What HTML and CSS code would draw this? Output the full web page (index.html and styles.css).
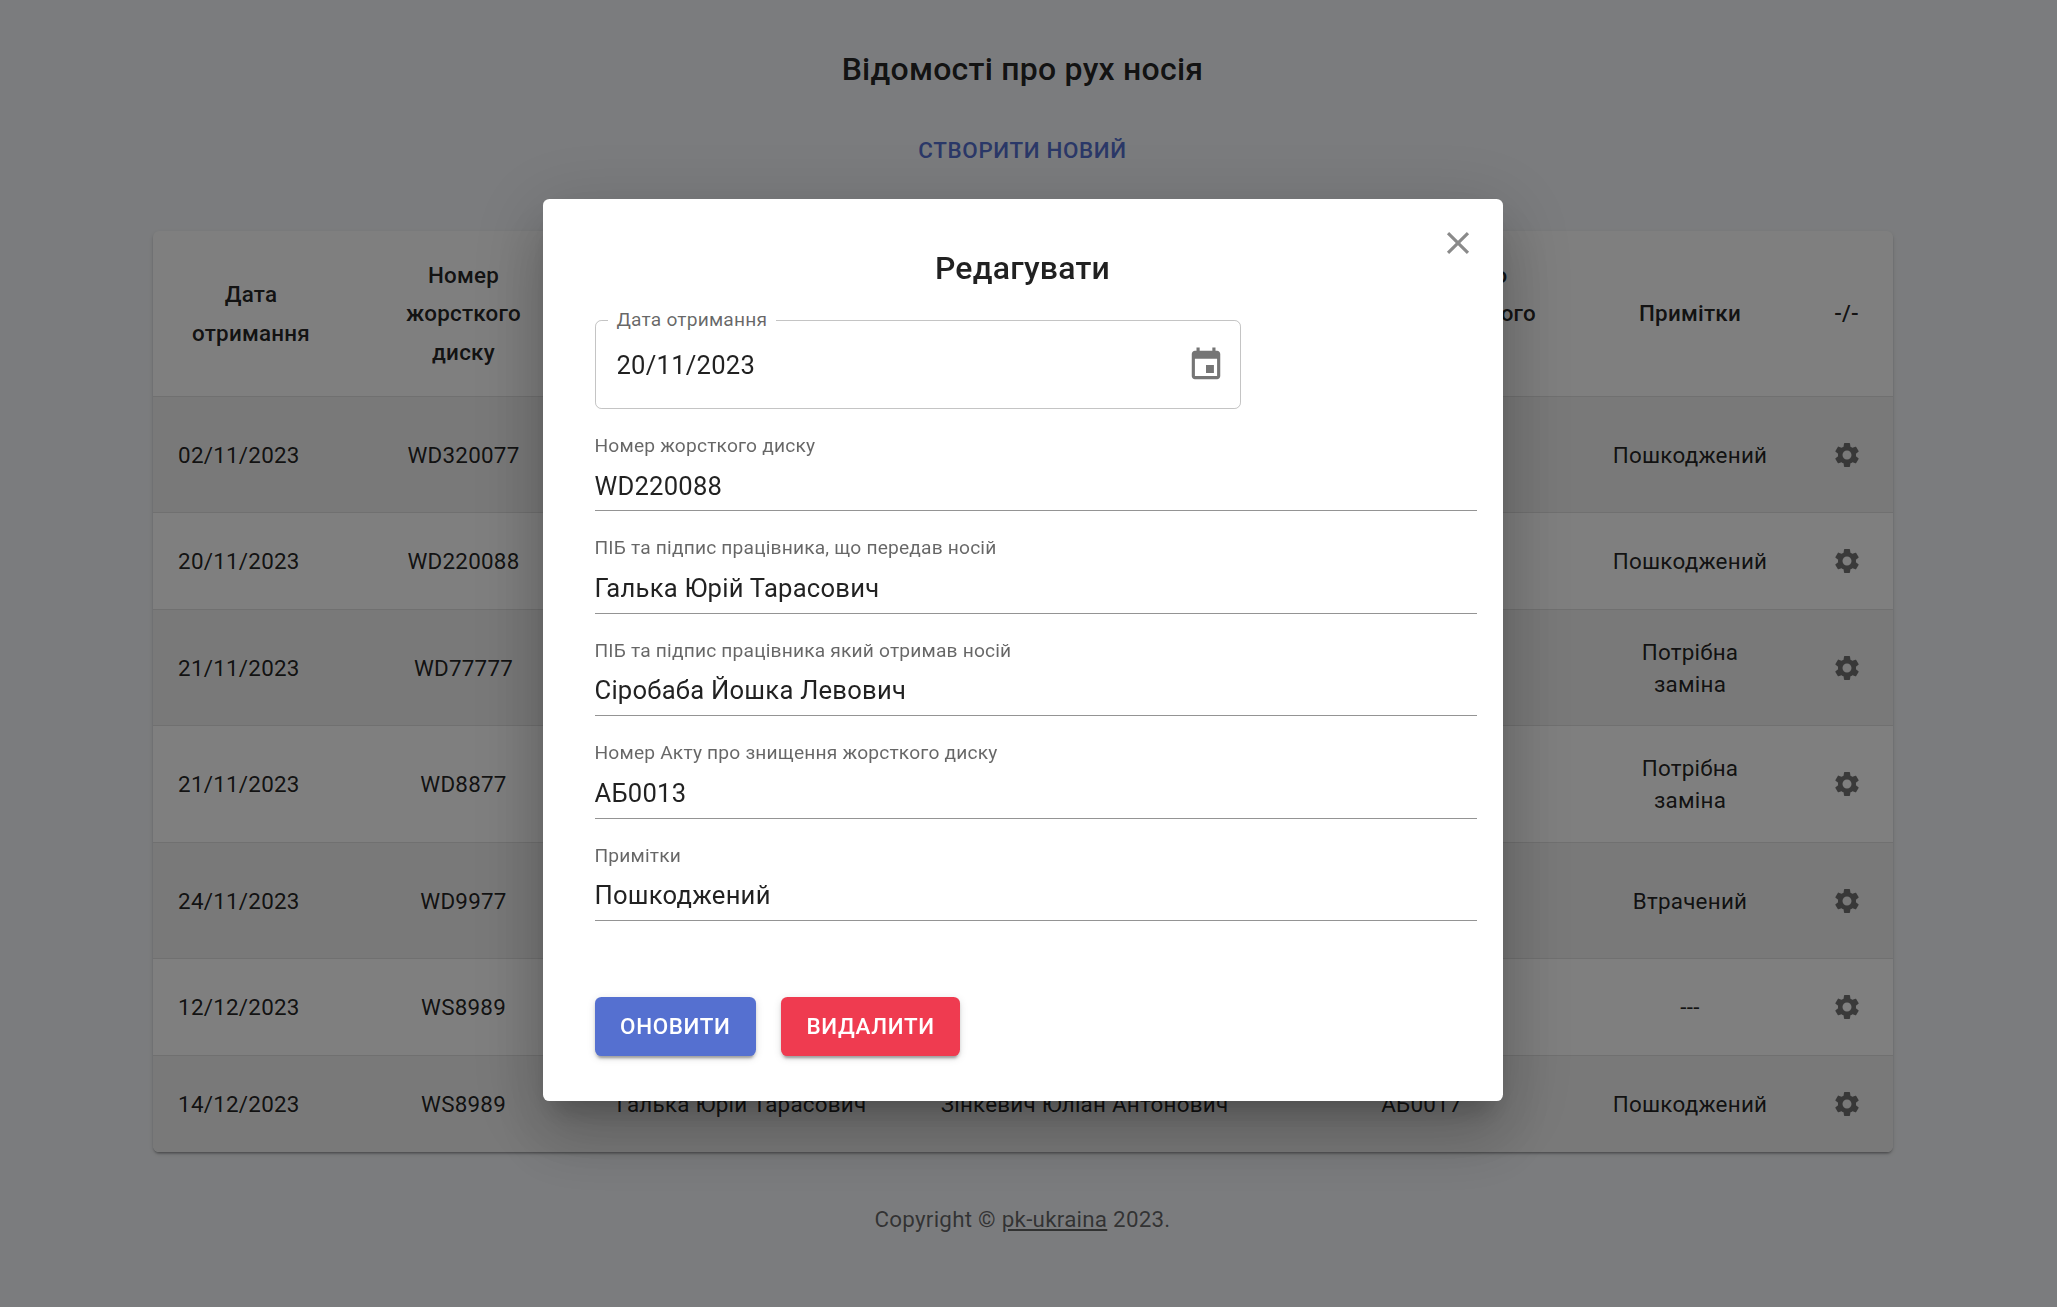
FILE: index.html
```html
<!DOCTYPE html>
<html lang="uk">
<head>
  <meta charset="UTF-8">
  <meta name="viewport" content="width=device-width, initial-scale=1.0">
  <title>Відомості про рух носія</title>
  <link rel="stylesheet" href="styles.css">
</head>
<body>
  <svg class="sprite" aria-hidden="true">
    <symbol id="gear" viewBox="0 0 24 24"><path d="M19.14 12.94c.04-.3.06-.61.06-.94 0-.32-.02-.64-.07-.94l2.03-1.58c.18-.14.23-.41.12-.61l-1.92-3.32c-.12-.22-.37-.29-.59-.22l-2.39.96c-.5-.38-1.03-.7-1.62-.94l-.36-2.54c-.04-.24-.24-.41-.48-.41h-3.84c-.24 0-.43.17-.47.41l-.36 2.54c-.59.24-1.13.57-1.62.94l-2.39-.96c-.22-.08-.47 0-.59.22L2.74 8.87c-.12.21-.08.47.12.61l2.03 1.58c-.05.3-.09.63-.09.94s.02.64.07.94l-2.03 1.58c-.18.14-.23.41-.12.61l1.92 3.32c.12.22.37.29.59.22l2.39-.96c.5.38 1.03.7 1.62.94l.36 2.54c.05.24.24.41.48.41h3.84c.24 0 .44-.17.47-.41l.36-2.54c.59-.24 1.13-.56 1.62-.94l2.39.96c.22.08.47 0 .59-.22l1.92-3.32c.12-.22.07-.47-.12-.61l-2.01-1.58zM12 15.6c-1.98 0-3.6-1.62-3.6-3.6s1.62-3.6 3.6-3.6 3.6 1.62 3.6 3.6-1.62 3.6-3.6 3.6z"/></symbol>
  </svg>

  <div class="page">
    <h1 class="page-title">Відомості про рух носія</h1>
    <a class="create-link" href="#">Створити новий</a>

    <div class="table-card">
      <table class="moves">
        <colgroup>
          <col class="col-date"><col class="col-disk"><col class="col-from"><col class="col-to"><col class="col-act"><col class="col-note"><col class="col-gear">
        </colgroup>
        <thead>
          <tr>
            <th>Дата отримання</th>
            <th>Номер жорсткого диску</th>
            <th></th>
            <th></th>
            <th>Номер Акту про знищення жорсткого диску</th>
            <th>Примітки</th>
            <th>-/-</th>
          </tr>
        </thead>
        <tbody>
          <tr class="tall">
            <td class="date">02/11/2023</td><td>WD320077</td><td></td><td></td><td></td><td>Пошкоджений</td>
            <td><svg class="gear"><use href="#gear"/></svg></td>
          </tr>
          <tr class="short">
            <td class="date">20/11/2023</td><td>WD220088</td><td></td><td></td><td></td><td>Пошкоджений</td>
            <td><svg class="gear"><use href="#gear"/></svg></td>
          </tr>
          <tr class="tall">
            <td class="date">21/11/2023</td><td>WD77777</td><td></td><td></td><td></td><td>Потрібна заміна</td>
            <td><svg class="gear"><use href="#gear"/></svg></td>
          </tr>
          <tr class="tall taller">
            <td class="date">21/11/2023</td><td>WD8877</td><td></td><td></td><td></td><td>Потрібна заміна</td>
            <td><svg class="gear"><use href="#gear"/></svg></td>
          </tr>
          <tr class="tall">
            <td class="date">24/11/2023</td><td>WD9977</td><td></td><td></td><td></td><td>Втрачений</td>
            <td><svg class="gear"><use href="#gear"/></svg></td>
          </tr>
          <tr class="short">
            <td class="date">12/12/2023</td><td>WS8989</td><td></td><td></td><td></td><td>---</td>
            <td><svg class="gear"><use href="#gear"/></svg></td>
          </tr>
          <tr class="short">
            <td class="date">14/12/2023</td><td>WS8989</td><td>Галька Юрій Тарасович</td><td>Зінкевич Юліан Антонович</td><td>АБ0017</td><td>Пошкоджений</td>
            <td><svg class="gear"><use href="#gear"/></svg></td>
          </tr>
        </tbody>
      </table>
    </div>

    <p class="copyright">Copyright © <a href="#">pk-ukraina</a> 2023.</p>
  </div>

  <div class="overlay">
    <div class="modal">
      <svg class="close" viewBox="0 0 24 24"><path d="M19 6.41 17.59 5 12 10.59 6.41 5 5 6.41 10.59 12 5 17.59 6.41 19 12 13.41 17.59 19 19 17.59 13.41 12z"/></svg>
      <h2 class="modal-title">Редагувати</h2>

      <div class="date-field">
        <span class="date-label">Дата отримання</span>
        <span class="date-value">20/11/2023</span>
        <svg class="calendar" viewBox="0 0 24 24"><path d="M17 12h-5v5h5v-5zM16 1v2H8V1H6v2H5c-1.11 0-1.99.9-1.99 2L3 19c0 1.1.89 2 2 2h14c1.1 0 2-.9 2-2V5c0-1.1-.9-2-2-2h-1V1h-2zm3 18H5V8h14v11z"/></svg>
      </div>

      <div class="field">
        <div class="field-label">Номер жорсткого диску</div>
        <div class="field-value">WD220088</div>
      </div>
      <div class="field">
        <div class="field-label">ПІБ та підпис працівника, що передав носій</div>
        <div class="field-value">Галька Юрій Тарасович</div>
      </div>
      <div class="field">
        <div class="field-label">ПІБ та підпис працівника який отримав носій</div>
        <div class="field-value">Сіробаба Йошка Левович</div>
      </div>
      <div class="field">
        <div class="field-label">Номер Акту про знищення жорсткого диску</div>
        <div class="field-value">АБ0013</div>
      </div>
      <div class="field">
        <div class="field-label">Примітки</div>
        <div class="field-value">Пошкоджений</div>
      </div>

      <div class="actions">
        <button class="btn btn-update">Оновити</button>
        <button class="btn btn-delete">Видалити</button>
      </div>
    </div>
  </div>
</body>
</html>
```

FILE: styles.css
```css
html, body {
  margin: 0;
  padding: 0;
  height: 100%;
  overflow: hidden;
}
body {
  background: #f7f9fc;
  color: rgba(0, 0, 0, 0.87);
  font-family: Roboto, "Noto Sans", sans-serif;
}
.sprite {
  display: none;
}

/* page behind the dialog */
.page {
  width: 2045px;
  display: flex;
  flex-direction: column;
  align-items: center;
  padding-top: 43px;
}
.page-title {
  margin: 0;
  font-size: 32px;
  line-height: 52px;
  font-weight: 500;
  letter-spacing: 0.24px;
}
.create-link {
  margin-top: 26px;
  padding: 10px 26px;
  color: #5570d0;
  font-size: 22.4px;
  line-height: 39px;
  font-weight: 500;
  letter-spacing: 0.64px;
  text-transform: uppercase;
  text-decoration: none;
}
.table-card {
  width: 1740px;
  margin-top: 51px;
  background: #fff;
  border-radius: 6.4px;
  overflow: hidden;
  box-shadow: 0 3px 2px -2px rgba(0, 0, 0, 0.2), 0 2px 2px rgba(0, 0, 0, 0.14), 0 2px 5px rgba(0, 0, 0, 0.12);
}
.moves {
  width: 100%;
  table-layout: fixed;
  border-collapse: collapse;
  font-size: 22.4px;
  letter-spacing: 0.24px;
  line-height: 32px;
}
.col-date { width: 197px; }
.col-disk { width: 228px; }
.col-from { width: 328px; }
.col-to { width: 358px; }
.col-act { width: 316px; }
.col-note { width: 221px; }
.col-gear { width: 92px; }
.moves th,
.moves td {
  padding: 0 25.6px;
  text-align: center;
  vertical-align: middle;
  border-bottom: 1px solid #e0e0e0;
}
.moves th {
  height: 165px;
  font-weight: 500;
  line-height: 38.4px;
}
.moves td.date {
  text-align: left;
}
.moves tbody tr:nth-child(odd) {
  background: #f3f3f3;
}
.moves tbody tr:last-child td {
  border-bottom: 0;
}
.tall td { height: 115px; }
.taller td { height: 116px; }
.short td { height: 96px; }
.gear {
  display: block;
  width: 30px;
  height: 30px;
  margin: 0 auto;
  fill: rgba(0, 0, 0, 0.54);
}
.copyright {
  margin: 51px 0 0;
  font-size: 22.4px;
  line-height: 32px;
  letter-spacing: 0.24px;
  color: rgba(0, 0, 0, 0.6);
}
.copyright a {
  color: inherit;
}

/* dialog */
.overlay {
  position: fixed;
  inset: 0;
  padding: 199px 12px 0 0;
  display: flex;
  justify-content: center;
  align-items: flex-start;
  background: rgba(0, 0, 0, 0.5);
}
.modal {
  position: relative;
  box-sizing: border-box;
  width: 960px;
  height: 902px;
  padding: 44px 26px 0 52px;
  background: #fff;
  border-radius: 6.4px;
  box-shadow: 0 18px 24px -11px rgba(0, 0, 0, 0.2), 0 38px 61px 5px rgba(0, 0, 0, 0.14), 0 14px 74px 13px rgba(0, 0, 0, 0.12);
}
.close {
  position: absolute;
  top: 25px;
  right: 26px;
  width: 38px;
  height: 38px;
  fill: rgba(0, 0, 0, 0.46);
}
.modal-title {
  margin: 0 0 26px -26px;
  text-align: center;
  font-size: 32px;
  line-height: 51px;
  font-weight: 500;
  letter-spacing: 0.24px;
}
.date-field {
  position: relative;
  box-sizing: border-box;
  width: 646px;
  height: 89px;
  padding: 0 15px 0 21px;
  display: flex;
  align-items: center;
  justify-content: space-between;
  border: 1px solid rgba(0, 0, 0, 0.23);
  border-radius: 6.4px;
}
.date-label {
  position: absolute;
  top: -13px;
  left: 12px;
  padding: 0 9px;
  background: #fff;
  color: rgba(0, 0, 0, 0.6);
  font-size: 19.2px;
  line-height: 23px;
  letter-spacing: 0.18px;
}
.date-value {
  font-size: 25.6px;
  letter-spacing: 0.24px;
}
.calendar {
  width: 38px;
  height: 38px;
  fill: rgba(0, 0, 0, 0.54);
}
.field {
  box-sizing: border-box;
  height: 102.4px;
  padding-top: 25px;
  border-bottom: 1px solid rgba(0, 0, 0, 0.42);
}
.field-label {
  color: rgba(0, 0, 0, 0.6);
  font-size: 19.2px;
  line-height: 23px;
  letter-spacing: 0.18px;
}
.field-value {
  margin-top: 8.5px;
  font-size: 25.6px;
  line-height: 40px;
  letter-spacing: 0.24px;
}
.actions {
  display: flex;
  gap: 25px;
  margin-top: 76px;
}
.btn {
  height: 59px;
  padding: 0 25.6px;
  border: 0;
  border-radius: 6.4px;
  color: #fff;
  font-family: inherit;
  font-size: 22.4px;
  font-weight: 500;
  letter-spacing: 0.64px;
  text-transform: uppercase;
  box-shadow: 0 5px 2px -3px rgba(0, 0, 0, 0.2), 0 3px 3px rgba(0, 0, 0, 0.14), 0 2px 8px rgba(0, 0, 0, 0.12);
}
.btn-update {
  background: #5570d0;
}
.btn-delete {
  background: #ef3b50;
}
```
